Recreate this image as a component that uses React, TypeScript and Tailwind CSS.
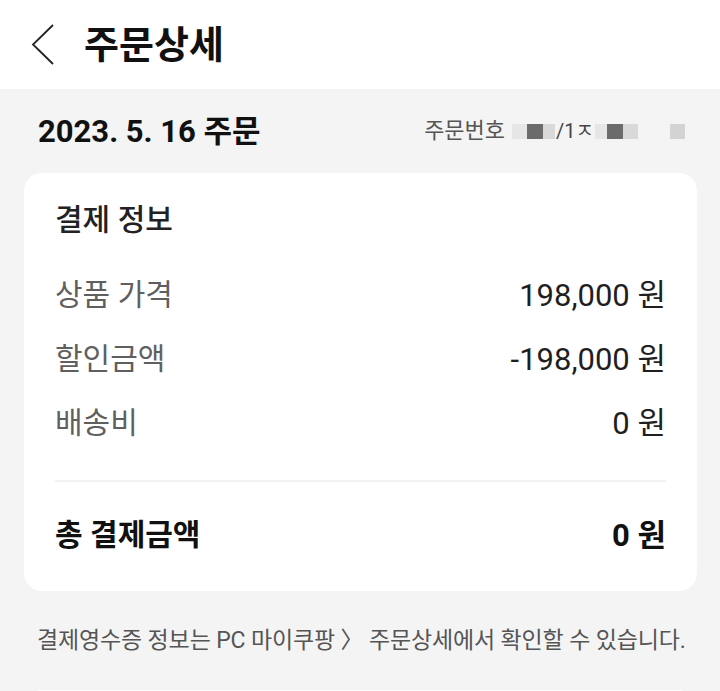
import React from "react";

const font = { fontFamily: 'Roboto, "Noto Sans CJK KR", sans-serif' };

function Row({ label, value }: { label: string; value: string }) {
  return (
    <div className="flex h-[64px] items-center justify-between">
      <span className="text-[30px] text-[#5f5f5f] leading-none">{label}</span>
      <span className="text-[31px] text-[#1f1f1f] leading-none">{value}</span>
    </div>
  );
}

export default function App() {
  return (
    <div className="w-[720px] h-[691px] overflow-hidden bg-[#f4f4f4]" style={font}>
      <header className="h-[89px] bg-white flex items-center">
        <svg width="24" height="42" viewBox="0 0 24 42" className="ml-[31px]">
          <polyline points="22,1 2,20.5 22,40" fill="none" stroke="#222" strokeWidth="1.8" />
        </svg>
        <h1 className="ml-[29px] text-[38px] font-bold text-[#111] leading-none">주문상세</h1>
      </header>

      <div className="h-[84px] flex items-center justify-between pl-[38px] pr-[35px]">
        <span className="text-[31px] font-bold text-[#111] leading-none">2023. 5. 16 주문</span>
        <div className="flex items-center whitespace-nowrap">
          <span className="text-[22px] text-[#555] leading-none mr-[7px]">주문번호</span>
          <span className="w-[15px] h-[15px] bg-[#e6e6e6]" />
          <span className="w-[16px] h-[15px] bg-[#6b6b6b]" />
          <span className="w-[12px] h-[15px] bg-[#d9d9d9]" />
          <span className="shrink-0 px-[1px] text-[20px] text-[#444] leading-none whitespace-nowrap">/1ㅈ</span>
          <span className="w-[12px] h-[15px] bg-[#e6e6e6]" />
          <span className="w-[16px] h-[15px] bg-[#6b6b6b]" />
          <span className="w-[15px] h-[15px] bg-[#d9d9d9]" />
          <span className="w-[32px]" />
          <span className="w-[15px] h-[15px] bg-[#d3d3d3]" />
        </div>
      </div>

      <div className="ml-[24px] mr-[23px] bg-white rounded-[18px] px-[31px] pt-[27px] pb-[24px]">
        <div className="h-[40px] flex items-center">
          <span className="text-[30px] font-medium text-[#222] leading-none">결제 정보</span>
        </div>
        <div className="mt-[23px]">
          <Row label="상품 가격" value="198,000 원" />
          <Row label="할인금액" value="-198,000 원" />
          <Row label="배송비" value="0 원" />
        </div>
        <div className="mt-[25px] h-[2px] bg-[#f2f2f2]" />
        <div className="flex h-[64px] items-center justify-between mt-[21px]">
          <span className="text-[30px] font-bold text-[#111] leading-none">총 결제금액</span>
          <span className="text-[31px] font-bold text-[#111] leading-none">0 원</span>
        </div>
      </div>

      <div className="h-[99px] flex items-center pl-[37px]">
        <span className="text-[23px] text-[#555] leading-none tracking-[-0.15px] whitespace-nowrap">
          결제영수증 정보는 PC 마이쿠팡 〉 주문상세에서 확인할 수 있습니다.
        </span>
      </div>
      <div className="mx-[24px] h-[20px] bg-white rounded-t-[18px]" />
    </div>
  );
}
